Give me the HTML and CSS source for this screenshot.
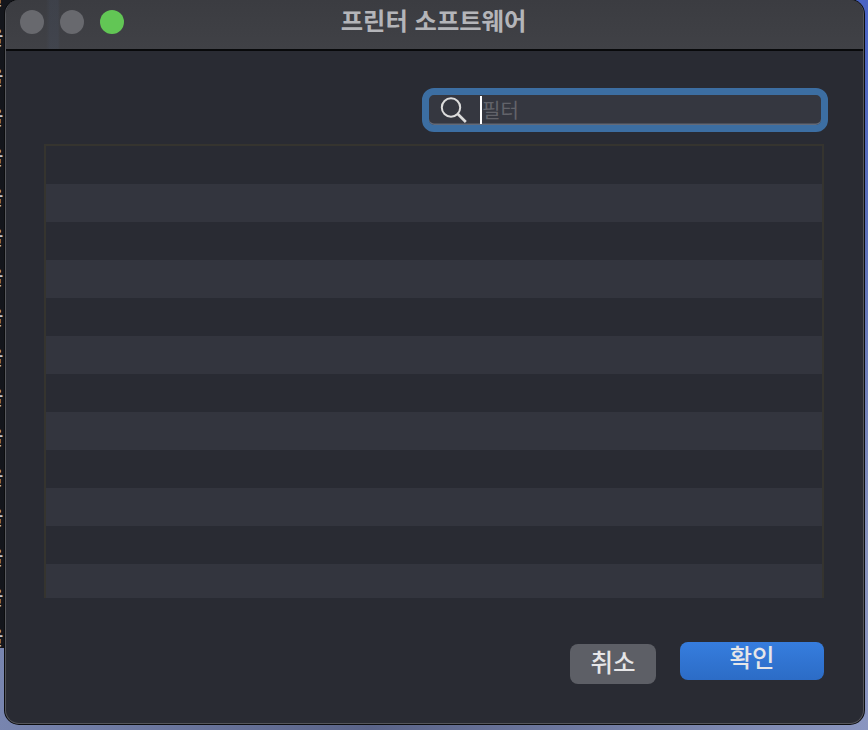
FILE: index.html
```html
<!DOCTYPE html>
<html lang="ko">
<head>
<meta charset="utf-8">
<title>프린터 소프트웨어</title>
<link rel="stylesheet" href="styles.css">
</head>
<body>
<div class="behind">
  <div class="behind-col"><span>을</span><span>을</span><span>을</span><span>을</span><span>을</span><span>을</span><span>을</span><span>을</span><span>을</span><span>을</span><span>을</span><span>을</span><span>을</span><span>을</span><span>을</span><span>을</span><span>을</span></div>
</div>
<main class="window">
  <header class="titlebar">
    <div class="lights">
      <span class="light"></span>
      <span class="light"></span>
      <span class="light light-green"></span>
    </div>
    <h1 class="title">프린터 소프트웨어</h1>
  </header>
  <div class="content">
    <div class="search-row">
      <div class="search">
        <svg class="search-icon" width="30" height="28" viewBox="0 0 30 28" fill="none"><circle cx="12" cy="11.5" r="9.2" stroke="#dcdcdc" stroke-width="2"/><path d="M18.8 18l8 8" stroke="#dcdcdc" stroke-width="2.6"/></svg>
        <span class="caret"></span>
        <span class="placeholder">필터</span>
      </div>
    </div>
    <div class="list">
      <div class="row"></div><div class="row alt"></div>
      <div class="row"></div><div class="row alt"></div>
      <div class="row"></div><div class="row alt"></div>
      <div class="row"></div><div class="row alt"></div>
      <div class="row"></div><div class="row alt"></div>
      <div class="row"></div><div class="row alt"></div>
    </div>
    <div class="actions">
      <button class="btn btn-cancel">취소</button>
      <button class="btn btn-ok">확인</button>
    </div>
  </div>
</main>
</body>
</html>
```
FILE: styles.css
```css
* { box-sizing: border-box; }
html, body { margin: 0; height: 100%; }
body {
  width: 868px;
  height: 730px;
  overflow: hidden;
  position: relative;
  background:
    linear-gradient(180deg, #4a64c4 0%, #5a6fb8 30%, transparent 75%),
    linear-gradient(100deg, #8290bc 0%, #5a6489 50%, #8a96c0 100%);
  font-family: "Noto Sans CJK KR", "Noto Sans", sans-serif;
}
.behind {
  position: absolute;
  left: 0;
  top: 0;
  width: 14px;
  height: 648px;
  background: #14161c;
  overflow: hidden;
}
.behind-col {
  display: flex;
  flex-direction: column;
  gap: 20px;
  margin-top: -13px;
  margin-left: -15px;
  color: #c4c6cc;
  font-size: 20px;
  line-height: 20px;
  font-weight: 500;
}
.window {
  position: absolute;
  left: 5px;
  top: 0;
  width: 859px;
  height: 724px;
  background: #292b33;
  border: 1px solid #55565b;
  border-top: 0;
  border-radius: 14px;
  box-shadow: 0 0 0 1px #0c0d0f;
  overflow: hidden;
  display: flex;
  flex-direction: column;
}
.titlebar {
  height: 51px;
  flex: none;
  position: relative;
  display: flex;
  align-items: center;
  justify-content: center;
  background:
    linear-gradient(90deg, transparent 40px, rgba(70, 80, 100, 0.25) 44px, rgba(70, 80, 100, 0.25) 52px, transparent 54px),
    linear-gradient(#3b3c41, #404146);
  border-bottom: 2px solid #08090b;
}
.lights {
  position: absolute;
  left: 14px;
  top: 10px;
  display: flex;
  gap: 16px;
}
.light {
  width: 24px;
  height: 24px;
  border-radius: 50%;
  background: #68696e;
}
.light-green { background: #62c655; }
.title {
  margin: 0 2px 10px 0;
  font-size: 24.3px;
  line-height: 30px;
  font-weight: 700;
  color: #b4b5b9;
}
.content {
  flex: 1;
  display: flex;
  flex-direction: column;
  padding: 37px 39px 0 38px;
}
.search-row {
  display: flex;
  justify-content: flex-end;
  margin-right: -4px;
}
.search {
  width: 406px;
  height: 44px;
  display: flex;
  align-items: center;
  padding-left: 10px;
  background: #353740;
  border: 7px solid #3c6ea2;
  border-radius: 12px;
  box-shadow: inset 0 -1.5px #636a78;
}
.search-icon { flex: none; }
.caret {
  width: 2px;
  height: 28px;
  margin-left: 11px;
  background: #ffffff;
  flex: none;
}
.placeholder {
  font-size: 20px;
  line-height: 28px;
  color: #62636a;
}
.list {
  margin-top: 12px;
  width: 780px;
  height: 454px;
  border: 2px solid #35342f;
  border-bottom: 0;
  display: flex;
  flex-direction: column;
  flex: none;
  overflow: hidden;
}
.row { height: 38px; flex: none; background: #292b33; }
.row.alt { background: #33353e; }
.actions {
  display: flex;
  justify-content: flex-end;
  align-items: flex-start;
  gap: 24px;
  margin-top: 44px;
}
.btn {
  border: 0;
  padding: 0;
  font-family: inherit;
  font-size: 24.5px;
  font-weight: 500;
  color: #e6e6e8;
  cursor: default;
}
.btn-cancel {
  margin-top: 2px;
  width: 86px;
  height: 40px;
  padding-bottom: 4px;
  line-height: 34px;
  border-radius: 8px;
  background: #5d5f66;
}
.btn-ok {
  width: 144px;
  height: 38px;
  line-height: 30px;
  padding-bottom: 8px;
  border-radius: 8px;
  background: linear-gradient(#367dde, #2c6cc6);
}
```
